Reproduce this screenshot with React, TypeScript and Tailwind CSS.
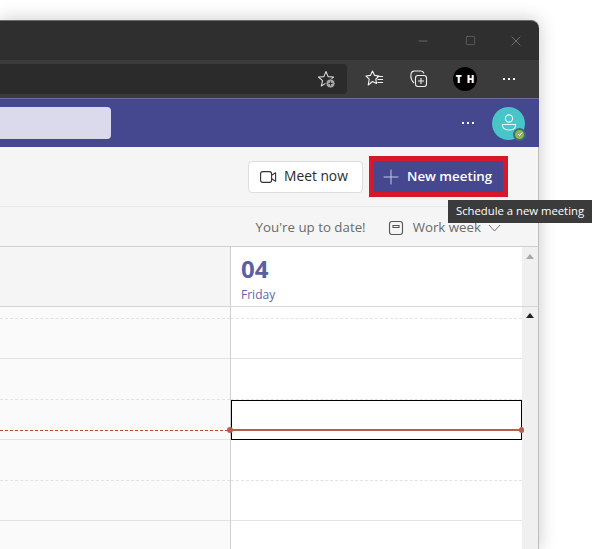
import { Minus, Plus, Square, X } from "lucide-react";

const rows = [
    { h: 12, line: "dashed" },
    { h: 40, line: "solid" },
    { h: 41, line: "dashed" },
    { h: 40, line: "solid" },
    { h: 41, line: "dashed" },
    { h: 40, line: "solid" },
    { h: 40, line: "none" },
];

function Dots({ className }: { className?: string }) {
    return (
        <div className={`flex items-center gap-[3px] ${className ?? ""}`}>
            <span className="w-[2px] h-[2px] bg-white" />
            <span className="w-[2px] h-[2px] bg-white" />
            <span className="w-[2px] h-[2px] bg-white" />
        </div>
    );
}

function StarAdd() {
    return (
        <svg width="20" height="20" viewBox="0 0 20 20" fill="none" stroke="#d8d8d8" strokeWidth="1.1">
            <path d="M9 2.5 L11.1 7.6 L16.6 8 L12.4 11.6 L13.7 17 L9 14.1 L4.3 17 L5.6 11.6 L1.4 8 L6.9 7.6 Z" strokeLinejoin="round" />
            <circle cx="13.5" cy="14.5" r="4.6" fill="#a5a5a5" stroke="#2b2b2b" strokeWidth="1" />
            <path d="M13.5 12.4 V16.6 M11.4 14.5 H15.6" stroke="#333" strokeWidth="1" />
        </svg>
    );
}

function StarList() {
    return (
        <svg width="20" height="20" viewBox="0 0 20 20" fill="none" stroke="#f0f0f0" strokeWidth="1.1">
            <path d="M7.5 2 L9.6 6.4 L14 7 L10.8 10.2 L11.5 14.5 L7.5 12.5 L3.2 16 L4.2 10.2 L1 7 L5.4 6.4 Z" strokeLinejoin="round" />
            <path d="M12 7.5 H18 M12.5 10.5 H18 M12.5 13.5 H18" />
        </svg>
    );
}

function Collections() {
    return (
        <svg width="20" height="20" viewBox="0 0 20 20" fill="none" stroke="#f0f0f0" strokeWidth="1.1">
            <path d="M5 14 C2.5 11.5 1.5 8 2 5 C2.3 3 3.5 2 5.5 2 H12 C13.5 2 14.5 3 15 4.5" />
            <rect x="6.5" y="6.5" width="11" height="11" rx="2.5" />
            <path d="M12 9 V15 M9 12 H15" />
        </svg>
    );
}

function Camera() {
    return (
        <svg width="17" height="14" viewBox="0 0 17 14" fill="none" stroke="#333" strokeWidth="1.1">
            <rect x="0.6" y="1.6" width="11" height="10.8" rx="2.2" />
            <path d="M11.6 5.2 L15.6 2.8 V11.2 L11.6 8.8" strokeLinejoin="round" />
        </svg>
    );
}

function Avatar() {
    return (
        <div className="relative w-[33px] h-[33px] rounded-full bg-[#47c5c9] flex items-center justify-center">
            <svg width="18" height="20" viewBox="0 0 18 20" fill="none" stroke="#eafafa" strokeWidth="1.1">
                <circle cx="9" cy="5.5" r="3.6" />
                <path d="M2.5 11.5 H15.5 V12.5 C15.5 15.5 12.5 17 9 17 C5.5 17 2.5 15.5 2.5 12.5 Z" />
            </svg>
            <div className="absolute -right-px -bottom-px w-[13px] h-[13px] rounded-full bg-[#8fb45c] border-2 border-[#3b6f74] flex items-center justify-center">
                <svg width="6" height="6" viewBox="0 0 6 6" fill="none" stroke="#fff" strokeWidth="1">
                    <path d="M1 3 L2.5 4.5 L5 1.5" />
                </svg>
            </div>
        </div>
    );
}

function DayColumn({ selected }: { selected?: boolean }) {
    return (
        <>
            {rows.map((row, i) => (
                <div
                    key={i}
                    style={{ height: row.h }}
                    className={`${row.line === "solid" ? "border-b border-[#e3e3e3]" : ""} ${row.line === "dashed" ? "border-b border-dashed border-[#e3e3e3]" : ""} ${selected && i === 3 ? "border border-black border-b-black" : ""}`}
                />
            ))}
        </>
    );
}

export default function App() {
    return (
        <div className="w-[610px] h-[549px] overflow-hidden bg-white pt-[20px] font-['Open_Sans',sans-serif]">
            <div className="relative w-[539px] h-[529px] rounded-tr-[8px] overflow-visible shadow-[0_0_18px_rgba(0,0,0,0.22)] flex flex-col">
                {/* Browser title bar */}
                <div className="h-[40px] bg-[#2f2f2f] border-t border-[#6a6a6a] rounded-tr-[8px] flex items-center justify-end text-[#8f8f8f]">
                    <Minus className="w-[14px] h-[14px] mr-[35px]" strokeWidth={1} />
                    <Square className="w-[11px] h-[11px] mr-[32px]" strokeWidth={1} />
                    <X className="w-[16px] h-[16px] mr-[15px]" strokeWidth={1} />
                </div>

                {/* Address bar row */}
                <div className="h-[38px] bg-[#3b3b3b] flex items-center">
                    <div className="w-[347px] h-[30px] bg-[#2b2b2b] rounded-r-[4px] flex items-center justify-end pr-[10px]">
                        <StarAdd />
                    </div>
                    <div className="ml-[18px]"><StarList /></div>
                    <div className="ml-[24px]"><Collections /></div>
                    <div className="ml-[24px] w-[24px] h-[24px] rounded-full bg-black flex items-center justify-center gap-[5px] text-white text-[10px] font-extrabold leading-none">
                        <span>T</span>
                        <span>H</span>
                    </div>
                    <Dots className="ml-[26px]" />
                </div>

                {/* Teams header */}
                <div className="h-[49px] bg-[#45488f] border-t border-[#6b6ba0] flex items-center">
                    <div className="w-[111px] h-[32px] bg-[#dbd9ec] rounded-r-[4px]" />
                    <Dots className="ml-[351px]" />
                    <div className="ml-[18px]"><Avatar /></div>
                </div>

                {/* Calendar toolbar */}
                <div className="h-[60px] bg-[#f5f5f5] border-b border-[#e8e8e8] border-r border-r-[#bdbdbd] flex items-center justify-end pr-[30px]">
                    <div className="h-[32px] w-[115px] bg-white border border-[#dedede] rounded-[4px] flex items-center pl-[11px] gap-[7px] text-[13.8px] font-medium text-[#2b2b2b]">
                        <Camera />
                        Meet now
                    </div>
                    <div className="ml-[6px] w-[139px] h-[41px] border-[5px] border-[#d7182a] bg-[#45488f] flex items-center pl-[5px] gap-[4px] text-[13.3px] font-semibold text-white">
                        <Plus className="w-[24px] h-[24px] text-[#c5c7e8]" strokeWidth={1} />
                        New meeting
                    </div>
                </div>

                {/* Status row */}
                <div className="h-[40px] bg-[#f5f5f5] border-b border-[#cfcfcf] border-r border-r-[#bdbdbd] flex items-center justify-end pt-[2px] pr-[37px] text-[13.3px] text-[#6b6b6b]">
                    <span>You're up to date!</span>
                    <svg className="ml-[22px]" width="16" height="16" viewBox="0 0 16 16" fill="none" stroke="#555" strokeWidth="1.1">
                        <rect x="1.5" y="1.5" width="13" height="13" rx="2.5" />
                        <path d="M5 5.5 H11 V7.5 H5 Z" />
                    </svg>
                    <span className="ml-[9px]">Work week</span>
                    <svg className="ml-[7px]" width="13" height="8" viewBox="0 0 13 8" fill="none" stroke="#777" strokeWidth="1">
                        <path d="M1 1 L6.5 7 L12 1" />
                    </svg>
                </div>

                {/* Day header */}
                <div className="h-[60px] flex border-b border-[#d6d6d6] border-r border-r-[#bdbdbd]">
                    <div className="w-[231px] bg-[#f5f5f5] border-r border-[#d0d0d0]" />
                    <div className="flex-1 bg-white pl-[10px] pt-[6px]">
                        <div className="text-[24px] leading-[32px] font-bold text-[#5b5fa8]">04</div>
                        <div className="text-[12px] leading-[16px] mt-[2px] text-[#6266a8]">Friday</div>
                    </div>
                    <div className="w-[16px] bg-[#f0f0f0] flex justify-center pt-[7px]">
                        <div className="w-0 h-0 border-x-[4px] border-x-transparent border-b-[5px] border-b-[#a8a8a8]" />
                    </div>
                </div>

                {/* Time grid */}
                <div className="relative flex-1 flex border-r border-[#bdbdbd] overflow-hidden">
                    <div className="w-[231px] bg-[#fafafa] border-r border-[#d0d0d0]">
                        <DayColumn />
                    </div>
                    <div className="flex-1 bg-white">
                        <DayColumn selected />
                    </div>
                    <div className="w-[16px] bg-[#f0f0f0] flex justify-center pt-[6px]">
                        <div className="w-0 h-0 border-x-[4px] border-x-transparent border-b-[5px] border-b-[#222]" />
                    </div>

                    {/* Current time marker */}
                    <div className="absolute left-0 w-[228px] top-[123px] h-px bg-[repeating-linear-gradient(90deg,#c4492f_0,#c4492f_3px,transparent_3px,transparent_5px)]" />
                    <div className="absolute left-[231px] w-[291px] top-[122px] h-[2px] bg-[#b5604e]" />
                    <div className="absolute left-[227px] top-[120px] w-[6px] h-[6px] rounded-full bg-[#b5604e]" />
                    <div className="absolute left-[519px] top-[120px] w-[5px] h-[6px] rounded-full bg-[#b5604e]" />
                </div>

                {/* Tooltip */}
                <div className="absolute left-[448px] top-[180px] w-[144px] h-[23px] bg-[#3b3b3b] flex items-center justify-center text-[11.3px] text-white whitespace-nowrap">
                    Schedule a new meeting
                </div>
            </div>
        </div>
    );
}
